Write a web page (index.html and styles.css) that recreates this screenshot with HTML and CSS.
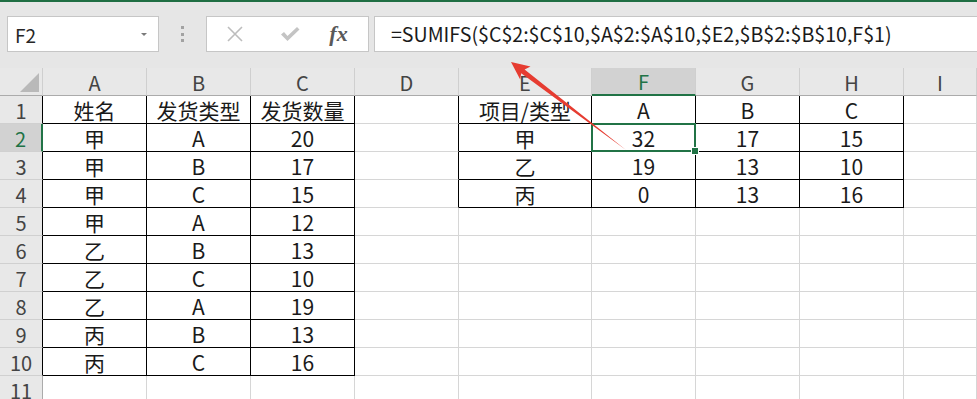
FILE: index.html
```html
<!DOCTYPE html>
<html lang="zh-CN">
  <head>
    <meta charset="UTF-8" />
    <title>SUMIFS 多条件求和</title>
    <link rel="stylesheet" href="styles.css">
  </head>
  <body>
    <div class="formula-bar">
      <div class="name-box"><span>F2</span><i class="caret"></i></div>
      <div class="grip"><i></i><i></i><i></i></div>
      <div class="fx-buttons">
        <svg class="btn-icon" viewBox="0 0 18 18" width="18" height="18"><path d="M2 2 L16 16 M16 2 L2 16" stroke="#bdbdbd" stroke-width="1.6" fill="none"/></svg>
        <svg class="btn-icon" viewBox="0 0 20 18" width="20" height="18"><path d="M1 9.5 L4 7 L7.5 11 L17 2 L19.5 4.5 L7.5 16 Z" fill="#c4c4c4"/></svg>
        <span class="fx">fx</span>
      </div>
      <div class="formula">=SUMIFS($C$2:$C$10,$A$2:$A$10,$E2,$B$2:$B$10,F$1)</div>
    </div>

    <table class="sheet">
      <colgroup>
        <col style="width:43px"><col style="width:104px"><col style="width:104px"><col style="width:104px">
        <col style="width:104px"><col style="width:133px"><col style="width:104px"><col style="width:104px">
        <col style="width:104px"><col>
      </colgroup>
      <thead>
        <tr>
          <th class="corner"><i></i></th>
          <th>A</th><th>B</th><th>C</th><th>D</th><th>E</th><th class="sel">F</th><th>G</th><th>H</th><th>I</th>
        </tr>
      </thead>
      <tbody>
        <tr>
          <th class="rh edge">1</th>
          <td class="t">姓名</td><td class="t">发货类型</td><td class="t">发货数量</td>
          <td class="tl"></td>
          <td class="t">项目/类型</td><td class="t">A</td><td class="t">B</td><td class="t">C</td><td></td>
        </tr>
        <tr>
          <th class="rh edge sel">2</th>
          <td class="t">甲</td><td class="t">A</td><td class="t">20</td>
          <td class="tl"></td>
          <td class="t">甲</td><td class="t active">32</td><td class="t">17</td><td class="t">15</td><td></td>
        </tr>
        <tr>
          <th class="rh edge">3</th>
          <td class="t">甲</td><td class="t">B</td><td class="t">17</td>
          <td class="tl"></td>
          <td class="t">乙</td><td class="t">19</td><td class="t">13</td><td class="t">10</td><td></td>
        </tr>
        <tr>
          <th class="rh edge">4</th>
          <td class="t">甲</td><td class="t">C</td><td class="t">15</td>
          <td class="tl"></td>
          <td class="t">丙</td><td class="t">0</td><td class="t">13</td><td class="t">16</td><td></td>
        </tr>
        <tr>
          <th class="rh edge">5</th>
          <td class="t">甲</td><td class="t">A</td><td class="t">12</td>
          <td></td><td></td><td></td><td></td><td></td><td></td>
        </tr>
        <tr>
          <th class="rh edge">6</th>
          <td class="t">乙</td><td class="t">B</td><td class="t">13</td>
          <td></td><td></td><td></td><td></td><td></td><td></td>
        </tr>
        <tr>
          <th class="rh edge">7</th>
          <td class="t">乙</td><td class="t">C</td><td class="t">10</td>
          <td></td><td></td><td></td><td></td><td></td><td></td>
        </tr>
        <tr>
          <th class="rh edge">8</th>
          <td class="t">乙</td><td class="t">A</td><td class="t">19</td>
          <td></td><td></td><td></td><td></td><td></td><td></td>
        </tr>
        <tr>
          <th class="rh edge">9</th>
          <td class="t">丙</td><td class="t">B</td><td class="t">13</td>
          <td></td><td></td><td></td><td></td><td></td><td></td>
        </tr>
        <tr>
          <th class="rh edge">10</th>
          <td class="t">丙</td><td class="t">C</td><td class="t">16</td>
          <td></td><td></td><td></td><td></td><td></td><td></td>
        </tr>
        <tr>
          <th class="rh">11</th>
          <td></td><td></td><td></td><td></td><td></td><td></td><td></td><td></td><td></td>
        </tr>
      </tbody>
    </table>

    <!-- annotation arrow pointing at the formula -->
    <svg class="arrow" width="977" height="399" viewBox="0 0 977 399">
      <polygon points="511,62 530.5,66.5 524.6,69.4 626,150 521.2,73.3 520.2,79.5" fill="#e63c31"/>
    </svg>
  </body>
</html>
```

FILE: styles.css
```css
body {
  margin: 0;
  position: relative;
  overflow: hidden;
  background-color: #ffffff;
  font-family: "Noto Sans CJK SC", sans-serif;
  color: #1a1a1a;
}

/* top formula bar */
.formula-bar {
  display: flex;
  align-items: flex-start;
  box-sizing: border-box;
  height: 68px;
  padding: 14px 0 0 7px;
  border-top: 2px solid #1f6e43;
  background-color: #e6e6e6;
}

.name-box {
  display: flex;
  align-items: center;
  justify-content: space-between;
  box-sizing: border-box;
  width: 152px;
  height: 36px;
  padding: 0 11px 0 7px;
  border: 1px solid #c6c6c6;
  background-color: #ffffff;
  font-size: 19px;
  color: #262626;
}

.caret {
  width: 0;
  height: 0;
  border-left: 3px solid transparent;
  border-right: 3px solid transparent;
  border-top: 3px solid #7a7a7a;
}

.grip {
  display: flex;
  flex-direction: column;
  gap: 3.5px;
  margin: 10px 22px 0 22px;
}

.grip i {
  width: 3px;
  height: 3px;
  background-color: #a2a2a2;
}

.fx-buttons {
  display: grid;
  grid-template-columns: 56px 54px 1fr;
  align-items: center;
  justify-items: center;
  box-sizing: border-box;
  width: 163px;
  height: 36px;
  border: 1px solid #c6c6c6;
  background-color: #ffffff;
}

.fx {
  font-family: "Liberation Serif", serif;
  font-style: italic;
  font-weight: bold;
  font-size: 22px;
  line-height: 22px;
  color: #595959;
  margin-right: 8px;
}

.formula {
  flex: 1;
  box-sizing: border-box;
  height: 36px;
  margin: 0 -10px 0 5px;
  padding-left: 16px;
  border: 1px solid #c6c6c6;
  background-color: #ffffff;
  font-size: 19.6px;
  line-height: 33px;
  color: #1a1a1a;
  white-space: nowrap;
}

/* worksheet grid */
.sheet {
  table-layout: fixed;
  width: 977px;
  border-collapse: separate;
  border-spacing: 0;
}

.sheet tr {
  height: 28px;
}

.sheet th,
.sheet td {
  box-sizing: border-box;
  padding: 0;
  border-right: 1px solid #d6d6d6;
  border-bottom: 1px solid #d6d6d6;
  font-size: 21px;
  line-height: 25px;
  text-align: center;
  vertical-align: bottom;
  overflow: hidden;
  white-space: nowrap;
}

.sheet th {
  font-weight: normal;
  background-color: #e8e8e8;
  color: #444444;
  font-size: 20px;
}

.sheet thead th {
  border-right-color: #cfcfcf;
  border-bottom-color: #ababab;
}

.sheet thead th.sel {
  background-color: #d2d2d2;
  color: #217346;
  border-bottom: 2px solid #217346;
}

.corner {
  position: relative;
}

.corner i {
  position: absolute;
  right: 3px;
  bottom: 3px;
  width: 19px;
  height: 19px;
  background-color: #b9b9b9;
  clip-path: polygon(100% 0, 100% 100%, 0 100%);
}

.rh {
  border-right-color: #ababab !important;
  border-bottom-color: #d0d0d0 !important;
}

.rh.edge {
  border-right-color: #000000 !important;
}

.rh.sel {
  background-color: #d2d2d2;
  color: #217346;
  border-right: 2px solid #217346 !important;
}

.sheet td.t {
  border-right-color: #000000;
  border-bottom-color: #000000;
}

.sheet td.tl {
  border-right-color: #000000;
}

.sheet td.active {
  position: relative;
  overflow: visible;
}

.sheet td.active::before {
  content: "";
  position: absolute;
  left: -1px;
  top: -1px;
  right: -1px;
  bottom: -1px;
  border: 2px solid #217346;
}

.sheet td.active::after {
  content: "";
  position: absolute;
  right: -4px;
  bottom: -4px;
  width: 6px;
  height: 6px;
  background-color: #217346;
  border: 1px solid #ffffff;
  z-index: 1;
}

.arrow {
  position: absolute;
  left: 0;
  top: 0;
  pointer-events: none;
}
```
